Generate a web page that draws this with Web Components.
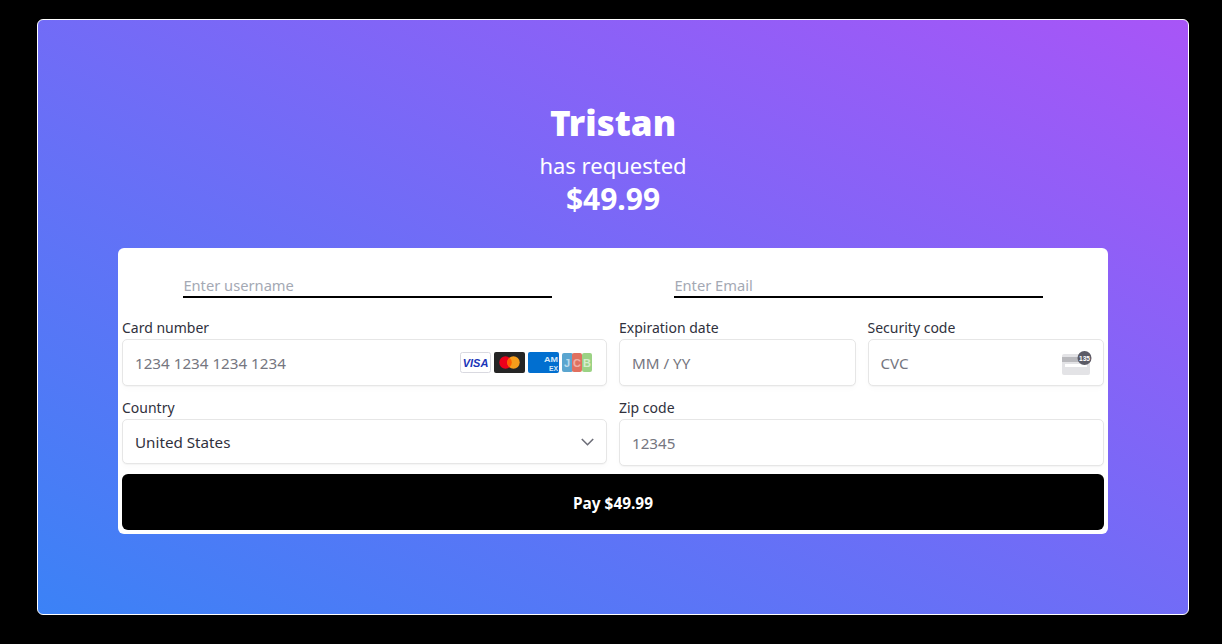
<!DOCTYPE html>
<html>
<head>
<meta charset="utf-8">
<title>Payment request</title>
<style>
    html, body {
        margin: 0;
        height: 100%;
        background: #000;
        font-family: "Noto Sans", "Open Sans", sans-serif;
    }
</style>
</head>
<body>
<payment-page>
    <request-header name="Tristan" amount="$49.99"></request-header>
    <checkout-card>
        <line-input slot="account" placeholder="Enter username"></line-input>
        <line-input slot="account" placeholder="Enter Email"></line-input>

        <field-box slot="fields" label="Card number" placeholder="1234 1234 1234 1234">
            <card-brands></card-brands>
        </field-box>
        <field-box slot="fields" label="Expiration date" placeholder="MM / YY"></field-box>
        <field-box slot="fields" label="Security code" placeholder="CVC">
            <cvc-icon></cvc-icon>
        </field-box>
        <field-box slot="fields" class="country" label="Country" value="United States" short>
            <svg width="13" height="8" viewBox="0 0 13 8" fill="none" stroke="#6d6e78" stroke-width="1.6">
                <path d="M.8 1l5.7 5.7L12.2 1"/>
            </svg>
        </field-box>
        <field-box slot="fields" class="zip" label="Zip code" placeholder="12345"></field-box>

        <pay-button slot="action">Pay $49.99</pay-button>
    </checkout-card>
</payment-page>

<script>
(function () {
    // Outer black page and the gradient panel
    class PaymentPage extends HTMLElement {
        constructor() {
            super();
            this.attachShadow({ mode: "open" }).innerHTML = `
<style>
    :host {
        display: block;
        box-sizing: border-box;
        height: 644px;
        padding: 19px 33px 29px 37px;
    }
    #panel {
        box-sizing: border-box;
        height: 100%;
        border: 1px solid #fff;
        border-radius: 6px;
        background: linear-gradient(to top right, #3b82f6, #a855f7);
        padding: 79px 80px 0;
        display: flex;
        flex-direction: column;
    }
</style>
<div id="panel"><slot></slot></div>`;
        }
    }

    // Name, "has requested" and the amount
    class RequestHeader extends HTMLElement {
        constructor() {
            super();
            this.attachShadow({ mode: "open" }).innerHTML = `
<style>
    :host {
        display: block;
        color: #fff;
        text-align: center;
        height: 149px;
    }
    h1 {
        margin: 0;
        font: 900 35px/48px "Noto Sans", sans-serif;
    }
    p {
        margin: 0;
        line-height: 32px;
    }
    #sub { margin-top: 2px; font-size: 22px; font-weight: 400; }
    #amount { font-weight: 700; font-size: 30px; line-height: 36px; }
</style>
<h1></h1>
<p id="sub">has requested</p>
<p id="amount"></p>`;
        }
        connectedCallback() {
            this.shadowRoot.querySelector("h1").textContent = this.getAttribute("name");
            this.shadowRoot.getElementById("amount").textContent = this.getAttribute("amount");
        }
    }

    class CheckoutCard extends HTMLElement {
        constructor() {
            super();
            this.attachShadow({ mode: "open" }).innerHTML = `
<style>
    :host {
        display: block;
        background: #fff;
        border-radius: 6px;
        padding: 4px;
        height: 286px;
        box-sizing: border-box;
    }
    #account {
        display: grid;
        grid-template-columns: 1fr 1fr;
        height: 46px;
        justify-items: center;
        align-items: end;
    }
    #fields {
        display: grid;
        grid-template-columns: 485px 1fr 1fr;
        column-gap: 12px;
        row-gap: 12px;
        margin-top: 20px;
    }
    #action { margin-top: 8px; }
</style>
<div id="account"><slot name="account"></slot></div>
<div id="fields"><slot name="fields"></slot></div>
<div id="action"><slot name="action"></slot></div>`;
        }
    }

    class LineInput extends HTMLElement {
        constructor() {
            super();
            this.attachShadow({ mode: "open" }).innerHTML = `
<style>
    :host {
        display: block;
        width: 75%;
        box-sizing: border-box;
        border-bottom: 2px solid #000;
        padding-bottom: 1px;
        color: #a4a9b4;
        font-size: 14.7px;
        line-height: 20px;
    }
</style>
<span></span>`;
        }
        connectedCallback() {
            this.shadowRoot.querySelector("span").textContent = this.getAttribute("placeholder");
        }
    }

    // Label with a bordered box, the slot holds what sits at the right of the box
    class FieldBox extends HTMLElement {
        constructor() {
            super();
            this.attachShadow({ mode: "open" }).innerHTML = `
<style>
    :host {
        display: block;
        color: #30313d;
        font-size: 14px;
    }
    :host(.country) { grid-column: 1; }
    :host(.zip) { grid-column: 2 / span 2; }
    label {
        display: block;
        line-height: 19px;
        margin-bottom: 2px;
    }
    #box {
        box-sizing: border-box;
        height: 47px;
        display: flex;
        align-items: center;
        justify-content: space-between;
        padding: 0 12px;
        border: 1px solid #e6e6e6;
        border-radius: 5px;
        box-shadow: 0 1px 1px rgba(0, 0, 0, 0.03), 0 3px 6px rgba(0, 0, 0, 0.02);
        font-size: 15.2px;
        background: #fff;
    }
    :host([short]) #box { height: 45px; }
    #text.placeholder { color: #757680; }
    ::slotted(*) { flex: none; }
</style>
<label></label>
<div id="box"><span id="text"></span><slot></slot></div>`;
        }
        connectedCallback() {
            let text = this.shadowRoot.getElementById("text");
            this.shadowRoot.querySelector("label").textContent = this.getAttribute("label");
            if (this.hasAttribute("value")) {
                text.textContent = this.getAttribute("value");
            } else {
                text.textContent = this.getAttribute("placeholder");
                text.className = "placeholder";
            }
        }
    }

    class CardBrands extends HTMLElement {
        constructor() {
            super();
            this.attachShadow({ mode: "open" }).innerHTML = `
<style>
    :host {
        display: flex;
        gap: 3px;
        margin-right: 2px;
    }
    svg { display: block; }
</style>
<svg width="31" height="21" viewBox="0 0 31 21">
    <rect x=".5" y=".5" width="30" height="20" rx="2" fill="#fff" stroke="#d9d9e0"/>
    <text x="15.5" y="14.5" text-anchor="middle" font-family="Liberation Sans" font-size="11" font-weight="700" font-style="italic" fill="#1a35b8">VISA</text>
</svg>
<svg width="31" height="21" viewBox="0 0 31 21">
    <rect width="31" height="21" rx="2" fill="#252525"/>
    <circle cx="11.5" cy="10.5" r="6.2" fill="#eb001b"/>
    <circle cx="19.5" cy="10.5" r="6.2" fill="#f79e1b"/>
    <path d="M15.5 5.7a6.2 6.2 0 0 1 0 9.6a6.2 6.2 0 0 1 0-9.6z" fill="#ff5f00"/>
</svg>
<svg width="31" height="21" viewBox="0 0 31 21">
    <rect width="31" height="21" rx="2" fill="#016fd0"/>
    <text x="16" y="9.5" font-family="Liberation Sans" font-size="8" font-weight="700" fill="#d5e8f8" textLength="14" lengthAdjust="spacingAndGlyphs">AM</text>
    <text x="21" y="18.5" font-family="Liberation Sans" font-size="8" font-weight="700" fill="#d5e8f8" textLength="9" lengthAdjust="spacingAndGlyphs">EX</text>
</svg>
<svg width="30" height="21" viewBox="0 0 30 21">
    <rect x="0" y="1" width="11" height="19" rx="2" fill="#5aa5cf"/>
    <rect x="10" y="1" width="10" height="19" rx="2" fill="#e0705f"/>
    <rect x="20" y="1" width="10" height="19" rx="2" fill="#9bd284"/>
    <text x="5" y="15" text-anchor="middle" font-family="Liberation Sans" font-size="11" font-weight="700" fill="#fff" opacity=".6">J</text>
    <text x="15" y="15" text-anchor="middle" font-family="Liberation Sans" font-size="11" font-weight="700" fill="#fff" opacity=".45">C</text>
    <text x="25" y="15" text-anchor="middle" font-family="Liberation Sans" font-size="11" font-weight="700" fill="#fff" opacity=".6">B</text>
</svg>`;
        }
    }

    class CvcIcon extends HTMLElement {
        constructor() {
            super();
            this.attachShadow({ mode: "open" }).innerHTML = `
<style>
    :host { display: block; margin-right: -1px; }
    svg { display: block; }
</style>
<svg width="30" height="24" viewBox="0 0 30 24">
    <rect x="0" y="3" width="28" height="21" rx="2" fill="#e3e3e6"/>
    <rect x="0" y="6" width="28" height="5" fill="#b9b9bd"/>
    <rect x="3" y="13" width="22" height="3" fill="#fff"/>
    <circle cx="22.5" cy="7" r="7" fill="#5b5b66"/>
    <text x="22.5" y="10" text-anchor="middle" font-family="Liberation Sans" font-size="8" font-weight="700" fill="#fff" textLength="11" lengthAdjust="spacingAndGlyphs">135</text>
</svg>`;
        }
    }

    class PayButton extends HTMLElement {
        constructor() {
            super();
            this.attachShadow({ mode: "open" }).innerHTML = `
<style>
    :host {
        display: flex;
        box-sizing: border-box;
        align-items: center;
        justify-content: center;
        height: 56px;
        padding-top: 2px;
        background: #000;
        color: #fff;
        border-radius: 6px;
        font-size: 15.4px;
        font-weight: 700;
        cursor: pointer;
    }
</style>
<slot></slot>`;
        }
    }

    customElements.define("payment-page", PaymentPage);
    customElements.define("request-header", RequestHeader);
    customElements.define("checkout-card", CheckoutCard);
    customElements.define("line-input", LineInput);
    customElements.define("field-box", FieldBox);
    customElements.define("card-brands", CardBrands);
    customElements.define("cvc-icon", CvcIcon);
    customElements.define("pay-button", PayButton);
})();
</script>
</body>
</html>
